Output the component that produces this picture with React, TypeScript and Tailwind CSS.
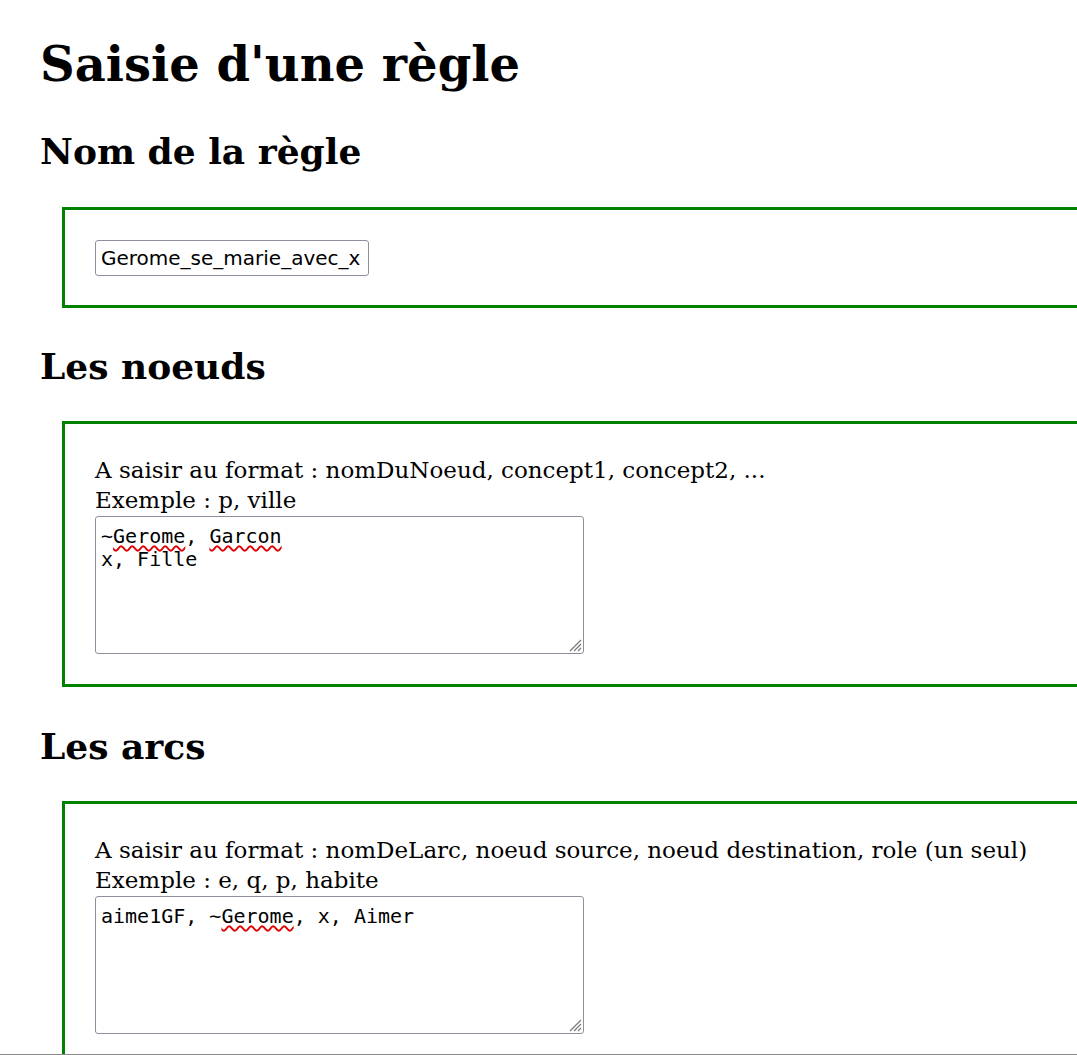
import React from "react";

const serif = { fontFamily: '"DejaVu Serif", Georgia, serif' };

function Grip() {
  return (
    <svg className="absolute bottom-[1px] right-[1px]" width="14" height="14" viewBox="0 0 14 14">
      <path d="M13 2 L2 13 M13 6 L6 13 M13 10 L10 13" stroke="#7a7a7a" strokeWidth="1.2" fill="none" />
    </svg>
  );
}

function Wavy({ children }: { children: React.ReactNode }) {
  return (
    <span className="underline decoration-wavy decoration-[#e00000] decoration-[1.5px] underline-offset-[2px]">{children}</span>
  );
}

function Area({ children }: { children: React.ReactNode }) {
  return (
    <div
      role="textbox"
      className="relative box-border h-[138px] w-[489px] rounded-[3px] border border-[#8f8f9d] bg-white pl-[5px] pt-[8px] text-[20px] leading-[23px] whitespace-pre text-black"
      style={{ fontFamily: '"DejaVu Sans Mono", "Liberation Mono", monospace' }}
    >
      {children}
      <Grip />
    </div>
  );
}

export default function App() {
  return (
    <div className="box-border h-[1055px] w-[1077px] overflow-hidden border-b border-[#8a8a8a] bg-white text-black" style={serif}>
      <div className="pl-[40px] pt-[34px]">
        <h1 className="text-[48px] font-bold leading-[60px]">Saisie d'une règle</h1>
        <h2 className="mt-[35px] text-[36px] font-bold leading-[44px]">Nom de la règle</h2>
        <div className="ml-[22px] mt-[34px] border-[3px] border-r-0 border-[#008000] pb-[29px] pl-[30px] pt-[30px]">
          <div
            className="box-border flex h-[36px] w-[274px] items-center rounded-[3px] border border-[#8f8f9d] pl-[5px] text-[20px]"
            style={{ fontFamily: '"DejaVu Sans", Verdana, sans-serif' }}
          >
            Gerome_se_marie_avec_x
          </div>
        </div>

        <h2 className="mt-[36px] text-[36px] font-bold leading-[44px]">Les noeuds</h2>
        <div className="ml-[22px] mt-[33px] border-[3px] border-r-0 border-[#008000] pb-[30px] pl-[30px] pt-[31px]">
          <div className="text-[23px] leading-[30px]">
            <div>A saisir au format : nomDuNoeud, concept1, concept2, ...</div>
            <div>Exemple : p, ville</div>
          </div>
          <div className="mt-[1px]">
            <Area>
              ~<Wavy>Gerome</Wavy>, <Wavy>Garcon</Wavy>
              {"\n"}x, Fille
            </Area>
          </div>
        </div>

        <h2 className="mt-[37px] text-[36px] font-bold leading-[44px]">Les arcs</h2>
        <div className="ml-[22px] mt-[33px] border-[3px] border-r-0 border-[#008000] pb-[30px] pl-[30px] pt-[31px]">
          <div className="text-[23px] leading-[30px]">
            <div>A saisir au format : nomDeLarc, noeud source, noeud destination, role (un seul)</div>
            <div>Exemple : e, q, p, habite</div>
          </div>
          <div className="mt-[1px]">
            <Area>
              aime1GF, ~<Wavy>Gerome</Wavy>, x, Aimer
            </Area>
          </div>
        </div>
      </div>
    </div>
  );
}
